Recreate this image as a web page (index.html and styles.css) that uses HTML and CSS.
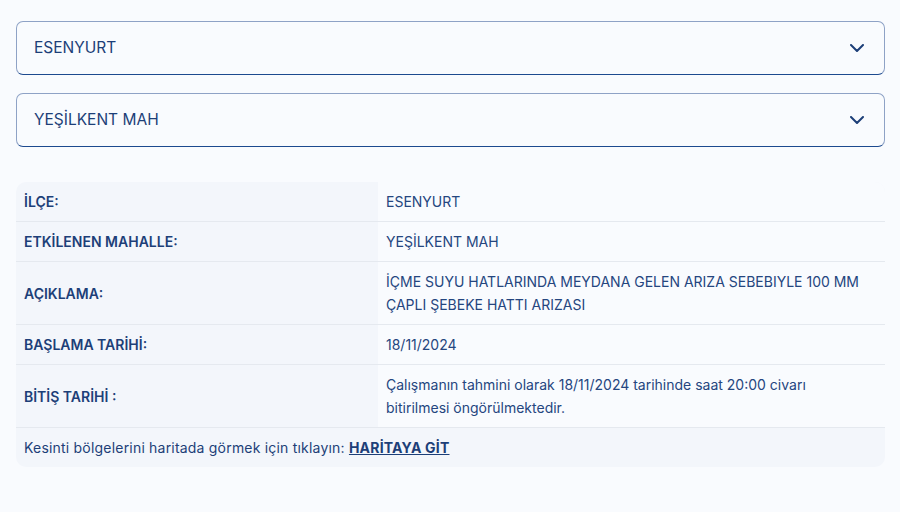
FILE: index.html
```html
<!DOCTYPE html>
<html lang="tr">
<head>
    <meta charset="UTF-8">
    <meta name="viewport" content="width=device-width, initial-scale=1.0">
    <title>Arıza Kesinti Sorgulama</title>
    <link rel="stylesheet" href="styles.css">
</head>
<body>

    <div class="page">
        <div class="select-box">
            <span>ESENYURT</span>
            <svg class="chevron" width="14" height="8" viewBox="0 0 14 8"><path d="M1 1l6 6 6-6" fill="none" stroke="#1d3f78" stroke-width="2" stroke-linecap="round" stroke-linejoin="round"/></svg>
        </div>
        <div class="select-box">
            <span>YEŞİLKENT MAH</span>
            <svg class="chevron" width="14" height="8" viewBox="0 0 14 8"><path d="M1 1l6 6 6-6" fill="none" stroke="#1d3f78" stroke-width="2" stroke-linecap="round" stroke-linejoin="round"/></svg>
        </div>

        <div class="info-table">
            <div class="info-row">
                <div class="label">İLÇE:</div>
                <div class="value">ESENYURT</div>
            </div>
            <div class="info-row">
                <div class="label">ETKİLENEN MAHALLE:</div>
                <div class="value">YEŞİLKENT MAH</div>
            </div>
            <div class="info-row">
                <div class="label">AÇIKLAMA:</div>
                <div class="value">İÇME SUYU HATLARINDA MEYDANA GELEN ARIZA SEBEBIYLE 100 MM ÇAPLI ŞEBEKE HATTI ARIZASI</div>
            </div>
            <div class="info-row">
                <div class="label">BAŞLAMA TARİHİ:</div>
                <div class="value">18/11/2024</div>
            </div>
            <div class="info-row">
                <div class="label">BİTİŞ TARİHİ :</div>
                <div class="value">Çalışmanın tahmini olarak 18/11/2024 tarihinde saat 20:00 civarı bitirilmesi öngörülmektedir.</div>
            </div>
            <div class="map-row">
                Kesinti bölgelerini haritada görmek için tıklayın: <a href="#">HARİTAYA GİT</a>
            </div>
        </div>
    </div>

</body>
</html>
```

FILE: styles.css
```css
body {
    margin: 0;
    padding: 0;
    background: #fff;
    font-family: 'Inter', 'Lato', sans-serif;
    color: #1d3f78;
}

.page {
    background: #f9fbfe;
    padding: 21px 15px 45px 16px;
}

.select-box {
    display: flex;
    align-items: center;
    justify-content: space-between;
    height: 52px;
    padding: 0 20px 0 17px;
    margin-bottom: 18px;
    border: 1px solid #8ea2c6;
    border-bottom-color: #1d4a8f;
    border-radius: 7px;
    font-size: 15.5px;
    color: #1d3f78;
}

.select-box span {
    margin-top: -2px;
}

.info-table {
    margin-top: 35px;
    border-radius: 10px;
    overflow: hidden;
    background: #f3f6fb;
}

.info-row {
    display: grid;
    grid-template-columns: 362px 1fr;
    border-bottom: 1px solid #e5e9ef;
}

.label {
    display: flex;
    align-items: center;
    padding: 8px;
    font-size: 14px;
    font-weight: 600;
    line-height: 23px;
    color: #1d3f78;
}

.value {
    background: #f9fbfe;
    padding: 8px 20px 8px 8px;
    font-size: 14px;
    line-height: 23px;
    color: #25467f;
}

.map-row {
    padding: 8px;
    font-size: 14px;
    line-height: 23px;
    letter-spacing: 0.2px;
    color: #1d3f78;
}

.map-row a {
    color: #1d3f78;
    font-weight: 700;
    text-decoration: underline;
}
```
